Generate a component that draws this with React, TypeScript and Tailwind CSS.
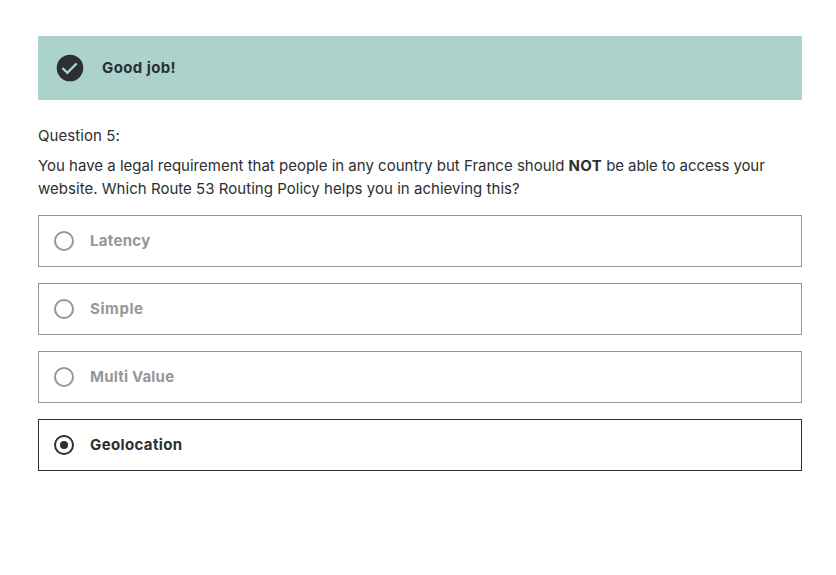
import React from "react";

const options = [
  { label: "Latency", selected: false, spacing: "tracking-[0.3px]" },
  { label: "Simple", selected: false, spacing: "tracking-[0.6px]" },
  { label: "Multi Value", selected: false, spacing: "tracking-[0.2px]" },
  { label: "Geolocation", selected: true, spacing: "tracking-[0.37px]" },
];

export default function App() {
  return (
    <main className="h-[575px] bg-white pl-[38px] pr-[34px] pt-9 font-['Inter','Liberation_Sans',sans-serif] text-[15px] text-[#2d2f31]">
      <div className="flex h-16 items-center bg-[#acd2cc] pl-[18px]">
        <svg className="size-7" viewBox="0 0 28 28" fill="none">
          <circle cx="14" cy="14" r="13.3" fill="#2d2f31" />
          <path d="M6.5 14l4.8 4.8L20.7 9.4" stroke="#acd2cc" strokeWidth="2.3" />
        </svg>
        <span className="ml-[18px] font-bold tracking-[0.4px]">Good job!</span>
      </div>
      <div className="mt-6 leading-6 tracking-[0.08px]">Question 5:</div>
      <p className="mt-[6px] whitespace-nowrap leading-[23px]">
        You have a legal requirement that people in any country but France should{" "}
        <b className="tracking-[0.3px]">NOT</b>
        <span className="tracking-[-0.08px]"> be able to access your</span>
        <br />
        <span className="tracking-[0.03px]">website. Which Route 53 Routing Policy helps you in achieving this?</span>
      </p>
      <div className="mt-[15px] flex flex-col gap-4">
        {options.map((o) => (
          <div key={o.label} className={`flex h-[52px] items-center border pl-[15px] font-bold ${o.selected ? "border-[#2d2f31] text-[#2d2f31]" : "border-[#969798] text-[#969798]"}`}>
            <span className="flex size-5 items-center justify-center rounded-full border-2 border-current">
              {o.selected && <span className="size-2 rounded-full bg-current" />}
            </span>
            <span className={`ml-4 ${o.spacing}`}>{o.label}</span>
          </div>
        ))}
      </div>
    </main>
  );
}
